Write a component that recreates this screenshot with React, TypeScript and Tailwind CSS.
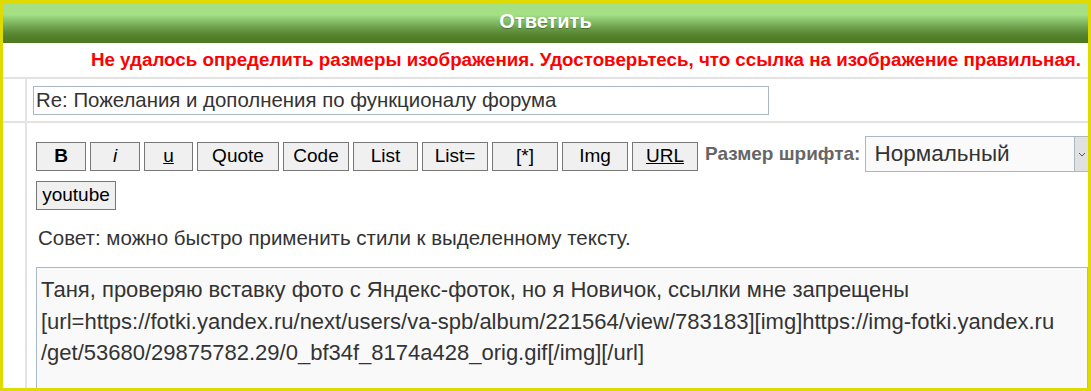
import React from 'react';

const buttons = [
  { label: 'B', w: 'w-[50px]', cls: 'font-bold' },
  { label: 'i', w: 'w-[50px]', cls: 'italic' },
  { label: 'u', w: 'w-[49px]', cls: 'underline' },
  { label: 'Quote', w: 'w-[82px]', cls: '' },
  { label: 'Code', w: 'w-[66px]', cls: '' },
  { label: 'List', w: 'w-[65px]', cls: '' },
  { label: 'List=', w: 'w-[66px]', cls: '' },
  { label: '[*]', w: 'w-[66px]', cls: '' },
  { label: 'Img', w: 'w-[66px]', cls: '' },
  { label: 'URL', w: 'w-[66px]', cls: 'underline' },
];

export default function App() {
  return (
    <div className="h-[391px] w-[1091px] overflow-hidden border-[3px] border-[#dfdb00] bg-white font-['Liberation_Sans',Arial,sans-serif] text-[#333]">
      {/* Header */}
      <div className="flex h-[40px] justify-center bg-[linear-gradient(to_bottom,#a6e085_0px,#a6e085_12px,#98d27a_14px,#87c06a_18px,#78ad58_22px,#689a46_26px,#5c8a36_30px,#517f28_35px,#4c7820_40px)] pt-[6px]">
        <span className="text-[20px] font-bold leading-[24px] text-white [text-shadow:0_1px_1px_rgba(0,0,0,0.3)]">Ответить</span>
      </div>

      {/* Error */}
      <div className="flex h-[36px] items-center justify-end border-b-2 border-[#e3e3e3] pr-[7px]">
        <span className="whitespace-nowrap text-[18.75px] font-bold text-[#ff0000]">
          Не удалось определить размеры изображения. Удостоверьтесь, что ссылка на изображение правильная.
        </span>
      </div>

      {/* Subject row */}
      <div className="flex h-[44px] border-b-2 border-[#e3e3e3]">
        <div className="w-[24px] shrink-0 border-r-2 border-[#e3e3e3]" />
        <div className="flex items-center pl-[6px]">
          <div className="flex h-[29px] w-[736px] items-center border border-[#a9b8c2] bg-white px-[2px] text-[20.4px] text-[#333]">
            Re: Пожелания и дополнения по функционалу форума
          </div>
        </div>
      </div>

      {/* Editor row */}
      <div className="flex h-[300px]">
        <div className="w-[24px] shrink-0 border-r-2 border-[#e3e3e3]" />
        <div className="min-w-0 flex-1 pl-[9px]">
          <div className="mt-[13px] flex items-start gap-[4px]">
            {buttons.map((b) => (
              <button
                key={b.label}
                className={`mt-[6px] flex h-[29px] shrink-0 ${b.w} items-center justify-center border border-[#777] bg-[#f0f0f0] text-[19px] text-black ${b.cls}`}
              >
                {b.label}
              </button>
            ))}
            <span className="ml-[3px] shrink-0 self-center whitespace-nowrap text-[19px] font-bold text-[#666]">Размер шрифта:</span>
            <div className="ml-[1px] flex h-[36px] min-w-0 flex-1 items-stretch border border-r-0 border-[#a9b8c2] bg-[#fafafa]">
              <span className="flex flex-1 items-center pl-[8px] text-[22.5px] text-[#333]">Нормальный</span>
              <span className="flex w-[14px] items-center justify-center border-l border-[#a9b8c2] bg-[#e1e1e1]">
                <svg width="8" height="5" viewBox="0 0 8 5">
                  <path d="M1 1l3 3 3-3" fill="none" stroke="#555" strokeWidth="1" />
                </svg>
              </span>
            </div>
          </div>
          <div className="mt-[9px]">
            <button className="flex h-[29px] w-[80px] items-center justify-center border border-[#777] bg-[#f0f0f0] text-[19px] text-black">
              youtube
            </button>
          </div>
          <p className="mt-[16px] pl-[2px] text-[20.5px] leading-[24px] text-[#333]">
            Совет: можно быстро применить стили к выделенному тексту.
          </p>
          <div className="mt-[17px] h-[140px] border border-[#a9b8c2] bg-[#f9f9f9] px-[4px] pt-[6px] text-[22px] leading-[31.5px] text-[#333]">
            <div className="whitespace-nowrap">Таня, проверяю вставку фото с Яндекс-фоток, но я Новичок, ссылки мне запрещены</div>
            <div className="whitespace-nowrap">[url=https://fotki.yandex.ru/next/users/va-spb/album/221564/view/783183][img]https://img-fotki.yandex.ru</div>
            <div className="whitespace-nowrap">/get/53680/29875782.29/0_bf34f_8174a428_orig.gif[/img][/url]</div>
          </div>
        </div>
      </div>
    </div>
  );
}
